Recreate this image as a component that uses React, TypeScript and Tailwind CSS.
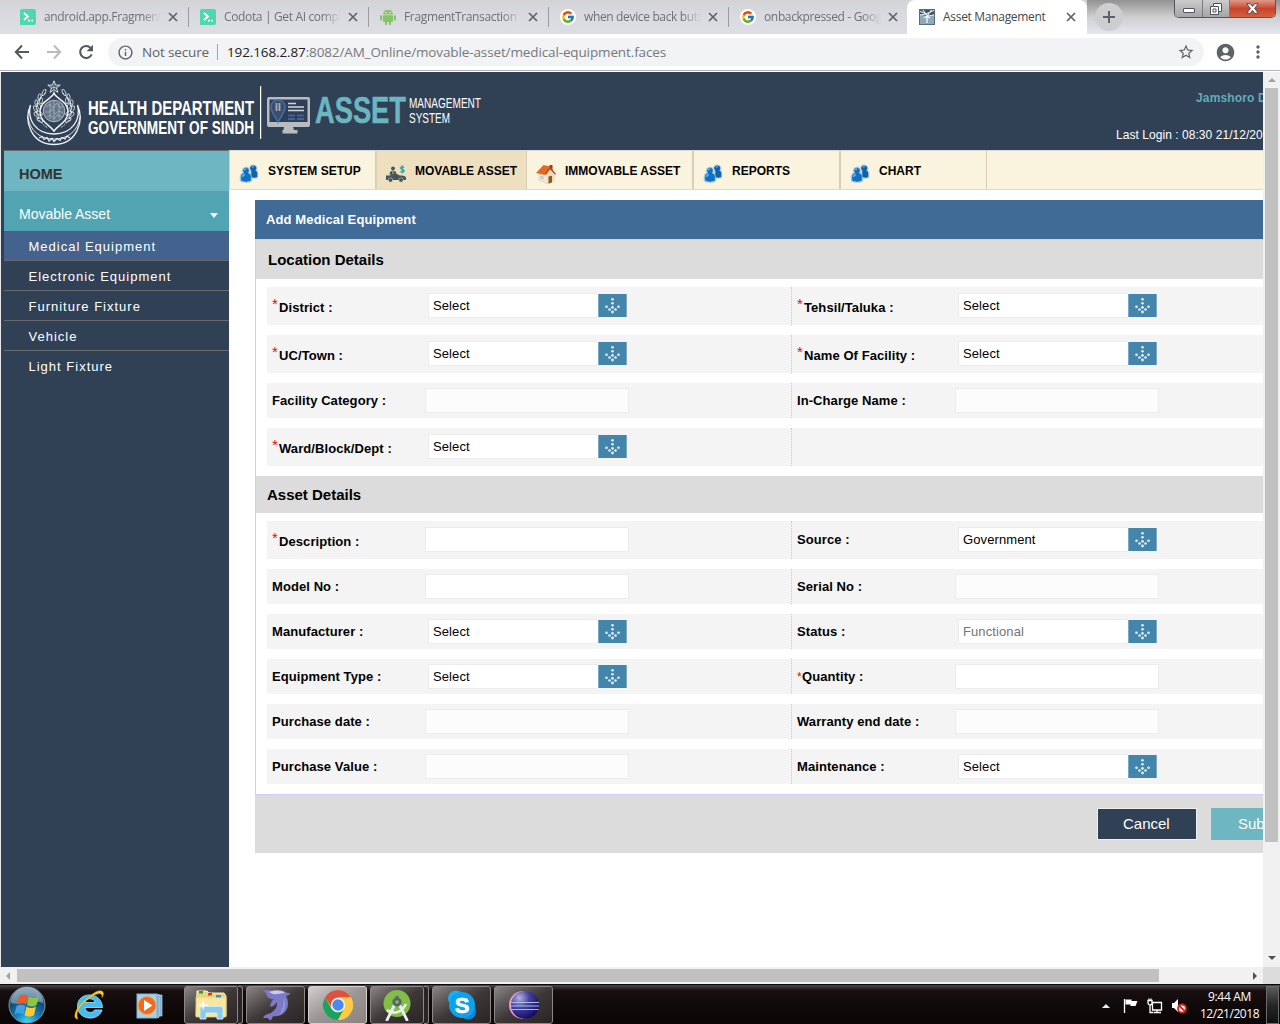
import React from "react";
import { MdInfoOutline, MdStarBorder, MdAccountCircle, MdMoreVert } from "react-icons/md";
import { FcGoogle } from "react-icons/fc";

/* ---------- Browser chrome ---------- */

function CloseGlyph({ className = "" }: { className?: string }) {
  return (
    <svg width="14" height="14" viewBox="0 0 14 14" className={`shrink-0 ${className}`}>
      <path d="M3 3l8 8M11 3l-8 8" stroke="#5f6368" strokeWidth="1.700" />
    </svg>
  );
}

function CodotaIcon() {
  return (
    <svg width="16" height="16" viewBox="0 0 16 16">
      <path d="M2 0h12a2 2 0 0 1 2 2v12a2 2 0 0 1-2 2H0V2a2 2 0 0 1 2-2z" fill="#4dd8ae" />
      <path d="M4 4l4 3.5L4 11" fill="none" stroke="#fff" strokeWidth="1.8" />
      <path d="M8 11.6h2M11.4 11.6h1.6" stroke="#fff" strokeWidth="1.8" />
    </svg>
  );
}

function AndroidIcon() {
  return (
    <svg width="16" height="16" viewBox="0 0 16 16" fill="#86c36a">
      <path d="M3 5.600a5 4.600 0 0 1 10 0z" />
      <path d="M5 .3l1.200 2M11 .3l-1.200 2" stroke="#86c36a" strokeWidth=".8" />
      <rect x="3" y="6.300" width="10" height="6.700" rx="1" />
      <rect x="0" y="6.200" width="2.200" height="5.500" rx="1.100" />
      <rect x="13.800" y="6.200" width="2.200" height="5.500" rx="1.100" />
      <rect x="5" y="11" width="2.200" height="5" rx="1.100" />
      <rect x="8.800" y="11" width="2.200" height="5" rx="1.100" />
      <circle cx="6" cy="3.700" r=".6" fill="#fff" />
      <circle cx="10" cy="3.700" r=".6" fill="#fff" />
    </svg>
  );
}

function GoogleIcon() {
  return (
    <span className="flex h-4 w-4 items-center justify-center rounded-full bg-white">
      <FcGoogle size={14} />
    </span>
  );
}

function AssetFavicon() {
  return (
    <svg width="16" height="16" viewBox="0 0 16 16">
      <rect width="16" height="16" fill="#8ea9ba" />
      <path d="M0 0h16v5l-8 2-8-2z" fill="#3d5262" />
      <path d="M0 2l7 3 9-4M1 6l6-1 2 2 6-1M3 0l4 5M13 0L9 6" stroke="#e4edf2" strokeWidth="1.1" fill="none" />
      <path d="M8 6v8M5 9l3-2 3 2" stroke="#f4f8fa" strokeWidth="1.3" fill="none" />
      <rect x=".5" y=".5" width="15" height="15" fill="none" stroke="#5b6d79" />
    </svg>
  );
}

const tabs = [
  { title: "android.app.Fragment", icon: <CodotaIcon /> },
  { title: "Codota | Get AI comple", icon: <CodotaIcon /> },
  { title: "FragmentTransaction", icon: <AndroidIcon /> },
  { title: "when device back button", icon: <GoogleIcon /> },
  { title: "onbackpressed - Google", icon: <GoogleIcon /> },
];

function TabStrip() {
  return (
    <div className="flex h-[34px] bg-linear-to-b from-[#d3d3d6] via-[#dadbe0] to-[#dcdee4] pl-2 font-['Open_Sans',sans-serif] text-[12px] text-[#6d7074]">
      {tabs.map((t, i) => (
        <div key={t.title} className="flex h-[34px] w-[180px] shrink-0 items-center pl-3">
          <span className="flex h-4 w-4 shrink-0 items-center justify-center">{t.icon}</span>
          <span className="ml-2 w-[117px] shrink-0 overflow-hidden whitespace-nowrap tracking-[-0.35px] [mask-image:linear-gradient(90deg,#000_84%,transparent)]">
            {t.title}
          </span>
          <CloseGlyph className="ml-[5px]" />
          {i < 4 && <span className="ml-[8px] h-5 w-px shrink-0 bg-[#9b9ca0]" />}
        </div>
      ))}
      <div className="-ml-px flex h-[34px] w-[180px] shrink-0 items-center rounded-t-[8px] bg-white pl-3 text-[#45484c]">
        <AssetFavicon />
        <span className="ml-2 w-[120px] whitespace-nowrap tracking-[-0.3px]">Asset Management</span>
        <CloseGlyph className="ml-px" />
      </div>
      <div className="flex h-[34px] flex-1 items-start justify-between bg-linear-to-b from-[#929292] via-[#cfcfd0] to-[#e4e6f1] pl-2 pr-1">
        <span className="mt-[3px] flex h-7 w-7 items-center justify-center rounded-full bg-[#cdced2]">
          <svg width="14" height="14" viewBox="0 0 14 14">
            <path d="M7 1v12M1 7h12" stroke="#5f6368" strokeWidth="2" />
          </svg>
        </span>
        <div className="flex h-[18px] w-[102px] overflow-hidden rounded-b-[5px] border border-t-0 border-[#55555a]">
          <div className="flex w-7 items-center justify-center border-r border-[#7b7b7e] bg-linear-to-b from-[#cccccd] to-[#a5a5a7]">
            <span className="mt-1 h-[5px] w-3 rounded-[1px] border border-[#50545c] bg-white" />
          </div>
          <div className="flex w-[27px] items-center justify-center border-r border-[#7b7b7e] bg-linear-to-b from-[#cccccd] to-[#a5a5a7]">
            <svg width="12" height="12" viewBox="0 0 12 12">
              <path d="M3.5.5h8v8h-3v3h-8v-8h3z" fill="#fff" stroke="#4b505c" />
              <path d="M3.5 3.5h5v5M3 6h3v3H3z" fill="none" stroke="#4b505c" />
            </svg>
          </div>
          <div className="flex flex-1 items-center justify-center bg-linear-to-b from-[#dd9a8a] via-[#c9432a] to-[#d2603f]">
            <svg width="13" height="11" viewBox="0 0 13 11">
              <path d="M.7.7h3.6l2.2 2.7L8.7.7h3.6L8.6 5.4l3.7 4.9H8.7L6.5 7.5l-2.2 2.8H.7l3.7-4.9z" fill="#fff" stroke="#5a4550" />
            </svg>
          </div>
        </div>
      </div>
    </div>
  );
}

function Toolbar() {
  return (
    <div className="flex h-9 items-center bg-white font-['Open_Sans',sans-serif] text-[13.5px] text-[#5f6368]">
      <svg width="16" height="16" viewBox="0 0 16 16" className="ml-[14px]" fill="none" stroke="#55595e" strokeWidth="2">
        <path d="M15 8H2.500M8 1.500L1.800 8 8 14.500" />
      </svg>
      <svg width="16" height="16" viewBox="0 0 16 16" className="ml-[16px]" fill="none" stroke="#b9bbbd" strokeWidth="2">
        <path d="M1 8h12.500M8 1.500L14.200 8 8 14.500" />
      </svg>
      <svg width="16" height="16" viewBox="0 0 16 16" className="ml-[16px]">
        <path d="M13.700 10.300A6 6 0 1 1 12.500 3.800" fill="none" stroke="#55595e" strokeWidth="2.100" />
        <path d="M15 .8v6.400H8.600z" fill="#55595e" />
      </svg>
      <div className="ml-[14px] flex h-7 w-[1096px] items-center rounded-full bg-[#f1f3f4] pl-[9px] pr-[9px]">
        <MdInfoOutline size={17} />
        <span className="ml-[8px] w-[75px] whitespace-nowrap tracking-[-0.15px]">Not secure</span>
        <span className="h-4 w-px bg-[#a2a4a7]" />
        <span className="ml-[9px] whitespace-nowrap tracking-[-0.125px] text-[#76797d]">
          <span className="text-[#202124]">192.168.2.87</span>:8082/AM_Online/movable-asset/medical-equipment.faces
        </span>
        <MdStarBorder size={18} className="ml-auto" />
      </div>
      <MdAccountCircle size={21} className="ml-[11px]" />
      <MdMoreVert size={20} className="ml-[12px]" />
    </div>
  );
}

/* ---------- Site header ---------- */

function SindhEmblem() {
  const leaves = [
    [16, 40, -40], [12.5, 35, -25], [11.5, 29, -5], [12.5, 23, 12], [15.5, 17, 28], [20, 12.5, 45],
    [15.5, 33, -35], [15, 26, -5], [17, 20.5, 20],
  ];
  return (
    <svg width="56" height="66" viewBox="0 0 56 66" fill="none" stroke="#eef1f4">
      <path d="M28 .8l1.6 4.3h4.6l-3.7 2.8 1.4 4.5-3.9-2.7-3.9 2.7 1.4-4.5-3.7-2.8h4.6z" strokeWidth=".9" />
      <path d="M28 4v6M25 6.5l6 2M31 6.500l-6 2" strokeWidth=".5" />
      <path d="M4.500 25C-3 42 6 64.500 28 64.500S59 42 51.500 25C55 40 46 54 28 54S1 40 4.500 25z" strokeWidth="1.300" />
      <path d="M2 37c2 14 12 22 26 22s24-8 26-22" strokeWidth=".9" />
      <path d="M13 58l3-1.500 2 3 3-2 2 3.500 3-2.500 2 3 3-3 3 2 2-3 3 1.500 2-3 3 2" strokeWidth="1.200" />
      <path d="M28 13c-2 6-14 8-14 18.500S24 45 28 51c4-6 14-9 14-19.500S30 19 28 13z" strokeWidth="1.500" />
      <circle cx="28" cy="31" r="10.800" strokeWidth=".6" fill="#65758a" />
      <path d="M20 27l4-3 3 4 4-5 3 5 3-2M19 32h5l2-3 3 5 4-3 4 2M21 37l4-2 3 4 3-4 5 2M28 21v20M24 22v17M33 23v15" strokeWidth=".6" stroke="#b7c0ca" />
      {leaves.map(([x, y, r], i) => (
        <g key={i} strokeWidth=".9" strokeOpacity=".85">
          <ellipse cx={x - 2} cy={y} rx="1.500" ry="3.300" transform={`rotate(${r - 20} ${x - 2} ${y})`} />
          <ellipse cx={58 - x} cy={y} rx="1.500" ry="3.300" transform={`rotate(${20 - r} ${58 - x} ${y})`} />
        </g>
      ))}
      <path d="M19 13C6 24 8 40 22 48M37 13c13 11 11 27-3 35" strokeWidth=".8" strokeDasharray="2 1" />
    </svg>
  );
}

function HeaderLogo() {
  return (
    <svg width="400" height="60" viewBox="0 0 400 60" fontFamily="'Liberation Sans Narrow','Liberation Sans',Arial,sans-serif">
      <g fill="#fff" fontWeight="700">
        <text x="0" y="33" fontSize="20.500" textLength="166" lengthAdjust="spacingAndGlyphs">HEALTH DEPARTMENT</text>
        <text x="0" y="52" fontSize="19" textLength="166" lengthAdjust="spacingAndGlyphs">GOVERNMENT OF SINDH</text>
      </g>
      <rect x="172" y="4" width="1.200" height="53" fill="#fff" />
      <g>
        <rect x="179" y="15" width="43" height="30" rx="2" fill="#b9bcbf" />
        <rect x="181.500" y="17.500" width="38" height="22.500" fill="#303f57" />
        <path d="M196 45h9l1 3h3.500v3.500h-15V48h1z" fill="#b9bcbf" />
        <path d="M190 40c-3-6-7-10-7-15a7 7 0 0 1 14 0c0 5-4 9-7 15z" fill="#3f4d68" stroke="#426fa8" strokeWidth="1.600" />
        <path d="M188.500 21v8M191.500 21v8" stroke="#a3acb8" strokeWidth="1.800" />
        <path d="M200 21.500h8M200 25h16M200 28.500h16" stroke="#cfd4da" strokeWidth="1.600" />
        <path d="M200 33.500h7M209 33.500h7M200 37h7M209 37h7" stroke="#3d6399" strokeWidth="2" />
      </g>
      <text x="227" y="40.700" fontSize="36" fontWeight="700" fill="#6cb6c2" stroke="#6cb6c2" strokeWidth=".5" textLength="91" lengthAdjust="spacingAndGlyphs">ASSET</text>
      <g fill="#fff" fontSize="14">
        <text x="321" y="26" textLength="72" lengthAdjust="spacingAndGlyphs">MANAGEMENT</text>
        <text x="321" y="41" textLength="41" lengthAdjust="spacingAndGlyphs">SYSTEM</text>
      </g>
    </svg>
  );
}

/* ---------- Navigation ---------- */

function UsersIcon() {
  const back = "M14.500 1.500a2.800 2.800 0 0 1 1.800 5q2 .5 2 2.500v4q-3 1.500-6 0V6.500a2.800 2.800 0 0 1 2.200-5z";
  const front = "M7 3.500a3.200 3.200 0 0 1 2.200 5.500q3 .8 3 3.500v4.300q-5 2.400-10.400 0V12.500q0-2.700 3-3.500A3.200 3.200 0 0 1 7 3.500z";
  return (
    <svg width="20" height="20" viewBox="0 0 20 20">
      <g stroke="#c3d3dc" strokeWidth="2.200" strokeLinejoin="round">
        <path d={back} />
        <path d={front} />
      </g>
      <path d={back} fill="#0c63ac" />
      <path d={front} fill="#0e71c4" stroke="#a9d2f0" strokeWidth=".5" />
      <path d="M5.400 6a1.800 1.800 0 0 1 1.600-1.100M3.500 13q.3-2 2.200-2.500M13.300 3.500a1.500 1.500 0 0 1 1.300-.7" stroke="#6dbcf0" strokeWidth="1.400" fill="none" />
    </svg>
  );
}

function CarIcon() {
  return (
    <svg width="20" height="18" viewBox="0 0 20 18">
      <circle cx="7" cy="3.500" r="1.900" fill="#44565a" />
      <path d="M3.500 9.500c0-3 1.500-3.800 3.500-3.800s3.500.8 3.500 3.800z" fill="#44565a" />
      <path d="M7 6v3" stroke="#e9dcc0" strokeWidth=".8" />
      <path d="M0 10.500h4l1-1.500h6l3 1.500c3 0 6 .5 6 2.500v2H0z" fill="#44565a" />
      <circle cx="4.500" cy="15" r="2.200" fill="#44565a" stroke="#eedfbf" strokeWidth=".5" />
      <circle cx="15" cy="15" r="2.200" fill="#44565a" stroke="#eedfbf" strokeWidth=".5" />
      <path d="M18 2.500c-.8-1-3.400-.9-3.400.6 0 1.700 3.500 1 3.500 2.800 0 1.500-2.800 1.600-3.700.4M16.300.3v8" stroke="#35a5a8" strokeWidth="1.400" fill="none" />
    </svg>
  );
}

function HouseIcon() {
  return (
    <svg width="22" height="22" viewBox="0 0 22 22">
      <rect x="14.500" y="2" width="3" height="5" fill="#9b3c16" />
      <path d="M4 10l6-3 9 3v8l-6 3-9-4z" fill="#f5e8cf" stroke="#d5bd94" strokeWidth=".5" />
      <path d="M12 11l3.500-6 4 6v7.500L12.500 21z" fill="#efdcb9" />
      <path d="M1 10L8.500 2l6.500 1.500L9.500 12z" fill="#e06b22" />
      <path d="M14.800 3.200L21 11l-1 .8-5-5.600-3.800 5.600-1.600-.5z" fill="#bc4715" />
      <path d="M13.500 13.500l3.500-.7v6.600l-3.500 1z" fill="#8a5a2b" />
      <path d="M5.500 12.500l3 1v3l-3-1z" fill="#a9c9dd" />
    </svg>
  );
}

function NavItem({ icon, label, className, active }: { icon: React.ReactNode; label: string; className: string; active?: boolean }) {
  return (
    <div className={`flex h-full shrink-0 border-r border-[#d9cfb5] pl-[8px] ${active ? "bg-[#eedfbf]" : ""} ${className}`}>
      <span className="mt-[13px] flex h-5 w-[22px] items-center justify-center">{icon}</span>
      <span className="ml-[8px] mt-[11px] whitespace-nowrap text-[12px] font-bold leading-[18px] text-black">{label}</span>
    </div>
  );
}

const sideItems = ["Medical Equipment", "Electronic Equipment", "Furniture Fixture", "Vehicle", "Light Fixture"];

function Sidebar() {
  return (
    <div className="flex w-[228px] shrink-0 flex-col bg-[#304156] pl-[3px] text-white">
      <div className="flex h-[41px] items-center border-t border-[#6a6a6c] bg-[#6db6c2] pl-[15px] pt-[8px] text-[14.5px] font-bold text-[#333]">HOME</div>
      <div className="flex h-10 items-center justify-between border-t-[3px] border-[#589fb7] bg-[#51a4b1] pl-[15px] pr-[11px] pt-[4px] text-[14px]">
        Movable Asset
        <span className="mt-px h-0 w-0 border-x-[4px] border-t-[5px] border-x-transparent border-t-white" />
      </div>
      {sideItems.map((s, i) => (
        <div
          key={s}
          className={`flex h-[30px] items-center pl-[24.5px] pt-[2px] text-[13px] tracking-[1px] ${i === 0 ? "bg-[#43628d]" : ""} ${i < 4 ? "border-b border-[#6a6a6c]" : ""}`}
        >
          {s}
        </div>
      ))}
    </div>
  );
}

/* ---------- Form ---------- */

type Field = { label: string; star?: boolean | "small"; kind?: "select" | "input" | "readonly"; value?: string; muted?: boolean };

function Select({ value = "Select", muted }: { value?: string; muted?: boolean }) {
  return (
    <div className="ml-[3px] flex h-[25px] w-[199px] items-center">
      <span className={`flex h-[25px] w-[170px] items-center border border-r-0 border-[#ececec] bg-white pl-[4px] text-[13px] tracking-[0.1px] ${muted ? "text-[#757575]" : "text-black"}`}>{value}</span>
      <span className="flex h-[23px] w-[29px] items-center justify-center border-x border-[#79a9c4] bg-[#4486ab]">
        <svg width="17" height="17" viewBox="0 0 17 17" fill="#e4eff5">
          <circle cx="8.500" cy="2.200" r="1.300" />
          <circle cx="8.500" cy="6.300" r="1.300" />
          <circle cx="8.500" cy="10.400" r="1.300" />
          <circle cx="8.500" cy="15" r="1.400" />
          <circle cx="2.500" cy="9.800" r="1.300" />
          <circle cx="14.500" cy="9.800" r="1.300" />
          <circle cx="5.500" cy="12.500" r="1.300" />
          <circle cx="11.500" cy="12.500" r="1.300" />
        </svg>
      </span>
    </div>
  );
}

function FieldCell({ field, right, tall }: { field?: Field; right?: boolean; tall: boolean }) {
  return (
    <div
      className={`flex h-full shrink-0 items-start pl-[5px] ${tall ? "pt-[6px]" : "pt-[5px]"} ${
        right ? "w-[560px] border-l border-dotted border-[#c5c5ee]" : "w-[524px]"
      }`}
    >
      {field && (
        <>
          <span className={`flex h-[25px] shrink-0 items-center whitespace-nowrap text-[13px] font-bold tracking-[0.08px] text-black ${right ? "w-[158px]" : "w-[153px]"}`}>
            {field.star === true && <span className="-mt-[4px] w-[7px] text-[15px] font-normal leading-4 text-[#f00]">*</span>}
            {field.star === "small" && <span className="w-[5px] text-[12px] font-normal text-[#f00]">*</span>}
            <span className={field.star === true ? "mt-[4px]" : ""}>{field.label} :</span>
          </span>
          {field.kind === "select" ? (
            <Select value={field.value} muted={field.muted} />
          ) : (
            <span className={`h-[25px] w-[204px] border border-[#ececec] ${field.kind === "readonly" ? "bg-[#fcfcfc]" : "bg-white"}`} />
          )}
        </>
      )}
    </div>
  );
}

function Row({ left, right }: { left: Field; right?: Field }) {
  const tall = left.star === true;
  return (
    <div className={`ml-[11px] flex shrink-0 overflow-hidden bg-[#f4f4f4] ${tall ? "h-[38px]" : "h-[35px]"}`}>
      <FieldCell field={left} tall={tall} />
      <FieldCell field={right} tall={tall} right />
    </div>
  );
}

const locationRows: [Field, Field?][] = [
  [{ label: "District", star: true, kind: "select" }, { label: "Tehsil/Taluka", star: true, kind: "select" }],
  [{ label: "UC/Town", star: true, kind: "select" }, { label: "Name Of Facility", star: true, kind: "select" }],
  [{ label: "Facility Category", kind: "readonly" }, { label: "In-Charge Name", kind: "readonly" }],
  [{ label: "Ward/Block/Dept", star: true, kind: "select" }],
];

const assetRows: [Field, Field?][] = [
  [{ label: "Description", star: true, kind: "input" }, { label: "Source", kind: "select", value: "Government" }],
  [{ label: "Model No", kind: "input" }, { label: "Serial No", kind: "readonly" }],
  [{ label: "Manufacturer", kind: "select" }, { label: "Status", kind: "select", value: "Functional", muted: true }],
  [{ label: "Equipment Type", kind: "select" }, { label: "Quantity", star: "small", kind: "input" }],
  [{ label: "Purchase date", kind: "readonly" }, { label: "Warranty end date", kind: "readonly" }],
  [{ label: "Purchase Value", kind: "readonly" }, { label: "Maintenance", kind: "select" }],
];

function EquipmentForm() {
  return (
    <div className="ml-[26px] mt-[10px] flex flex-col">
      <div className="flex h-[39px] items-center bg-[#3f6b96] pl-[11px] text-[13px] font-bold tracking-[0.12px] text-white">Add Medical Equipment</div>
      <div className="flex flex-col border-b border-l border-t border-[#ccccff] bg-white">
        <div className="flex h-[39px] items-center bg-[#dcdcdc] pl-[12px] pt-px text-[15px] font-bold text-black">Location Details</div>
        <div className="flex flex-col gap-[10px] pb-[10px] pt-[8px]">
          {locationRows.map(([l, r]) => <Row key={l.label} left={l} right={r} />)}
        </div>
        <div className="flex h-[37px] items-center bg-[#dcdcdc] pl-[11px] pt-[2px] text-[15px] font-bold text-black">Asset Details</div>
        <div className="flex flex-col gap-[10px] pb-[10px] pt-[8px]">
          {assetRows.map(([l, r]) => <Row key={l.label} left={l} right={r} />)}
        </div>
      </div>
      <div className="flex h-[58px] overflow-hidden bg-[#dcdcdc] pt-[13px] text-[15px] text-white">
        <span className="ml-[842px] flex h-8 w-[100px] shrink-0 items-center border border-[#efefef] bg-[#304156] pl-[25px]">Cancel</span>
        <span className="ml-[14px] flex h-8 w-[100px] shrink-0 items-center bg-[#6db6c2] pl-[27px]">Submit</span>
      </div>
    </div>
  );
}

/* ---------- Taskbar ---------- */

function TaskButton({ children, stacked, active, className = "" }: { children: React.ReactNode; stacked?: boolean; active?: boolean; className?: string }) {
  return (
    <div className={`flex h-[38px] shrink-0 ${className}`}>
      <div
        className={`flex items-center justify-center rounded-[3px] border ${stacked ? "w-[54px]" : "w-[59px]"} ${
          active
            ? "border-[#d4d0d0] bg-linear-to-br from-[#d0cecd] via-[#9b9594] to-[#8a8382]"
            : "border-[#8d8888] bg-linear-to-br from-[#8a8685] via-[#3e3838] to-[#2b2424]"
        }`}
      >
        {children}
      </div>
      {stacked && <span className="w-[5px] rounded-r-[3px] border-y border-r border-[#8d8888] bg-[#2a2424]" />}
    </div>
  );
}

function StartOrb() {
  return (
    <svg width="38" height="38" viewBox="0 0 38 38">
      <defs>
        <radialGradient id="orb" cx=".5" cy="1" r=".95">
          <stop offset="0" stopColor="#3fe0fb" />
          <stop offset=".35" stopColor="#1683bd" />
          <stop offset=".7" stopColor="#174a71" />
          <stop offset="1" stopColor="#5e87a5" />
        </radialGradient>
      </defs>
      <circle cx="19" cy="19" r="18" fill="url(#orb)" stroke="#7d95a5" />
      <path d="M3 17a16 16 0 0 1 32 0c-8-4-24 3-32 0z" fill="#c8dae6" opacity=".45" />
      <path d="M11 10c3.500-2 6.500-2 9 0l-2 8.500c-3-2-6-2-9 0z" fill="#ea5b26" />
      <path d="M21 10.500c3 2 6 2 10 0l-2.500 8.500c-3 2-6 2-9.500 0z" fill="#8dc63f" />
      <path d="M8.500 20c3-2 6-2 9 0l-2 8.500c-3-2-6-2-9 0z" fill="#3fa0e6" />
      <path d="M18.500 20.500c3 2 6 2 9.500 0l-2 8.500c-3 2-7 2-9.500 0z" fill="#fcc92f" />
    </svg>
  );
}

function IeIcon() {
  return (
    <svg width="32" height="32" viewBox="0 0 32 32">
      <path d="M29.500 18.500H12c.3 5.500 8 6.500 9.500 2.500h7.500C25.500 33 4.500 31.500 4.500 17S28.500 1.500 29.500 18.500zM12 13.500h10c-.5-5-9.500-5-10 0z" fill="#45bdf0" stroke="#a8e4fb" strokeWidth=".8" fillRule="evenodd" />
      <path d="M5 30c-5 .5-4-8 3-15S25-1 29.500 2.500c1.400 1.400 1 4-.5 6 .5-3-1-4.500-3.500-4C18 6 5 17 4 25c-.2 1.800.2 4 1 5z" fill="#fbcf27" stroke="#e5a90b" strokeWidth=".5" />
    </svg>
  );
}

function MediaIcon() {
  return (
    <svg width="28" height="26" viewBox="0 0 28 26">
      <path d="M8 2h18v21H8z" fill="#80b2d2" stroke="#b4d6ea" strokeWidth=".7" />
      <path d="M5 1.500h18v23H5z" fill="#6aa7cf" stroke="#c4e1f2" strokeWidth=".7" />
      <rect x="1" y="1" width="20" height="24" fill="#a9cfe6" stroke="#7cb4d8" />
      <circle cx="11" cy="12.500" r="9" fill="#ee6d1c" stroke="#f7a35f" />
      <path d="M8 7l8.500 5.500L8 18z" fill="#fff" />
    </svg>
  );
}

function ExplorerIcon() {
  return (
    <svg width="34" height="32" viewBox="0 0 34 32">
      <path d="M3 2h10l2 2h15l2 3v20H2z" fill="#eed383" stroke="#fff1b8" />
      <path d="M2 8h30v20H2z" fill="#f8e7a2" stroke="#e5c969" strokeWidth=".8" />
      <rect x="5" y="2" width="4" height="2.500" fill="#19a52b" />
      <rect x="14" y="4" width="4" height="2.500" fill="#d93d26" />
      <rect x="22" y="6" width="5" height="2.500" fill="#2a99dc" />
      <path d="M6 30V20q0-2.500 2.500-2.500h18q2.500 0 2.500 2.500v10h-6v-6H12v6z" fill="#8ccbe8" stroke="#caeaf6" />
      <path d="M9 10l1.200 5 5 1.200-5 1.300L9 22l-1-4.500-5-1.300L8 15z" fill="#fff" opacity=".9" />
    </svg>
  );
}

function DolphinIcon() {
  return (
    <svg width="32" height="32" viewBox="0 0 32 32">
      <path d="M3 1.500c4-.8 7-.5 9 .5 7-2 12-.5 14 1.500l4 .7c0 1.500-2 2.300-4 2.300 3.500 7 2.500 15-4 19-3 1.800-6 1.500-9 1.800-1 1.700-1 3.200-2.500 4.200-1.500-.5-2-1.700-2.300-2.500-2 0-3.700.3-5-.3C4 26 7 25 10 24.500c5-3 7.500-6.500 7-11.500-1.500 2.500-4 5-7 4.500.3-3 1.500-5 3.500-7.500C9 10 7 8 6.500 5.500 6 4 4.500 2.500 3 1.500z" fill="#7c79c6" />
      <path d="M9 3c6-2 12-2 16 1-4 0-9 2-12 1z" fill="#c9caee" />
      <path d="M24 8c2 7 1 14-4 17 3-6 4-11 4-17z" fill="#9a9ad9" />
    </svg>
  );
}

function ChromeIcon() {
  return (
    <svg width="32" height="32" viewBox="0 0 32 32">
      <circle cx="16" cy="16" r="15" fill="#fcc934" />
      <path d="M3 8.500A15 15 0 0 1 29 8.500H16a7.500 7.500 0 0 0-7 9z" fill="#dd5144" />
      <path d="M3 8.500A15 15 0 0 0 16 31l6.500-11.500A7.500 7.500 0 0 1 9.500 19.700z" fill="#1aa260" />
      <path d="M16 8.500h13A15 15 0 0 1 16 31l6.500-11.500A7.500 7.500 0 0 0 16 8.500z" fill="#fdcb43" />
      <circle cx="16" cy="16" r="7.200" fill="#f4f6f8" />
      <circle cx="16" cy="16" r="5.700" fill="#4a89f3" />
    </svg>
  );
}

function StudioIcon() {
  return (
    <svg width="30" height="32" viewBox="0 0 30 32">
      <circle cx="15" cy="14.500" r="13.500" fill="#82bd45" />
      <path d="M12 17L5 31M18 17l7 14" stroke="#eceff1" strokeWidth="2.800" strokeLinecap="round" />
      <path d="M5 21c6 4.500 14 3.500 19-6" fill="none" stroke="#eceff1" strokeWidth="2.600" />
      <path d="M13.500 7h3v3h-3z" fill="#54666b" />
      <circle cx="15" cy="13" r="3.200" fill="#8bc34a" stroke="#54666b" strokeWidth="2.800" />
    </svg>
  );
}

function SkypeIcon() {
  return (
    <svg width="30" height="32" viewBox="0 0 30 32">
      <circle cx="9" cy="9.500" r="8" fill="#12b3f3" />
      <circle cx="21" cy="22.500" r="8" fill="#0a8add" />
      <circle cx="15" cy="16" r="13" fill="#0ba3ea" />
      <text x="15" y="24" textAnchor="middle" fontFamily="'Liberation Sans',sans-serif" fontWeight="700" fontSize="22" fill="#fff" stroke="#fff" strokeWidth=".6">S</text>
    </svg>
  );
}

function EclipseIcon() {
  return (
    <svg width="32" height="30" viewBox="0 0 32 30">
      <defs>
        <radialGradient id="ecl" cx=".3" cy=".25" r=".8">
          <stop offset="0" stopColor="#b4b1e0" />
          <stop offset=".45" stopColor="#4540a0" />
          <stop offset="1" stopColor="#130b61" />
        </radialGradient>
      </defs>
      <circle cx="15" cy="15" r="14" fill="#e59bd0" />
      <circle cx="17" cy="15" r="14" fill="url(#ecl)" />
      <path d="M3 12.500h28M3 16h28M3.500 19.500h27" stroke="#a9bde5" strokeWidth="1.200" />
    </svg>
  );
}

function Tray() {
  return (
    <div className="ml-auto flex h-full items-center text-white">
      <span className="mt-[3px] h-0 w-0 border-x-[4px] border-b-[4px] border-x-transparent border-b-[#eee]" />
      <svg width="16" height="16" viewBox="0 0 16 16" className="ml-[13px] mt-[2px]">
        <path d="M1.500 1v14" stroke="#fff" strokeWidth="1.300" />
        <path d="M2.500 1.500h6V3h6c-1 2-1 3-2 5h-5V6.500h-5z" fill="#fff" />
      </svg>
      <svg width="16" height="16" viewBox="0 0 16 16" className="ml-[8px] mt-[2px]" fill="none" stroke="#fff" strokeWidth="1.300">
        <path d="M5.500 4.500h9v7.500h-9zM10 12v2.500M6.500 14.500h7.500M3 6.500v8h3M1 2.500h4v2.500a2 2 0 0 1-4 0zM2 .5v2M4 .5v2" />
      </svg>
      <svg width="17" height="16" viewBox="0 0 17 16" className="ml-[8px] mt-[2px]">
        <path d="M1 5h2l4-4v13l-4-4H1z" fill="#fff" />
        <circle cx="11" cy="10.500" r="4" fill="#fff" stroke="#d9231c" strokeWidth="1.800" />
        <path d="M8.300 8l5.500 5" stroke="#d9231c" strokeWidth="1.800" />
      </svg>
      <div className="ml-[8px] flex w-[67px] flex-col items-center whitespace-nowrap font-['Open_Sans',sans-serif] text-[12px] leading-[17px] tracking-[-0.45px]">
        <span className="tracking-[-0.3px]">9:44 AM</span>
        <span>12/21/2018</span>
      </div>
      <span className="ml-[3px] mr-px h-[38px] w-[13px] border border-[#6b6b6b] bg-linear-to-b from-[#5e5e5e] via-[#262626] to-[#111]" />
    </div>
  );
}

function Taskbar() {
  return (
    <div className="flex h-10 items-center border-t border-[#0a0a0a] bg-linear-to-b from-[#4b4646] via-[#160e0f] via-15% to-[#0a0506]">
      <div className="ml-[8px] h-[38px] w-[38px]"><StartOrb /></div>
      <div className="ml-[27px]"><IeIcon /></div>
      <div className="ml-[31px] mt-[2px]"><MediaIcon /></div>
      <TaskButton className="ml-[20px]" stacked><ExplorerIcon /></TaskButton>
      <TaskButton className="ml-[3px]"><DolphinIcon /></TaskButton>
      <TaskButton className="ml-[3px]" active><ChromeIcon /></TaskButton>
      <TaskButton className="ml-[3px]" stacked><StudioIcon /></TaskButton>
      <TaskButton className="ml-[3px]"><SkypeIcon /></TaskButton>
      <TaskButton className="ml-[3px]"><EclipseIcon /></TaskButton>
      <Tray />
    </div>
  );
}

/* ---------- Page ---------- */

function SitePage() {
  return (
    <div className="flex h-[895px] w-[1263px] flex-col overflow-hidden border-l border-[#e6e6e6] bg-white">
      <div className="flex h-[78px] shrink-0 overflow-hidden bg-[#304156]">
        <div className="ml-[25px] mt-[8px]"><SindhEmblem /></div>
        <div className="ml-[6px] mt-[10px]"><HeaderLogo /></div>
        <div className="ml-auto flex w-[147px] shrink-0 flex-col whitespace-nowrap text-[12px]">
          <span className="ml-[80px] mt-[17px] leading-[18px] font-bold tracking-[0.15px] text-[#62acba]">Jamshoro District</span>
          <span className="mt-[19px] leading-[18px] tracking-[0.05px] text-white">Last Login : 08:30 21/12/2018</span>
        </div>
      </div>
      <div className="flex flex-1">
        <Sidebar />
        <div className="flex flex-1 flex-col overflow-hidden">
          <div className="flex h-10 shrink-0 border-b border-l border-t border-b-[#d9d9d9] border-l-[#dccfb4] border-t-[#d9d9d9] bg-[#faf3dd]">
            <NavItem icon={<UsersIcon />} label="SYSTEM SETUP" className="w-[147px] border-r-2" />
            <NavItem icon={<CarIcon />} label="MOVABLE ASSET" className="w-[150px]" active />
            <NavItem icon={<HouseIcon />} label="IMMOVABLE ASSET" className="w-[167px] border-r-2" />
            <NavItem icon={<UsersIcon />} label="REPORTS" className="w-[147px] border-r-2" />
            <NavItem icon={<UsersIcon />} label="CHART" className="w-[146px]" />
          </div>
          <EquipmentForm />
        </div>
      </div>
    </div>
  );
}

export default function App() {
  return (
    <div className="flex h-[1024px] w-[1280px] flex-col overflow-hidden bg-white font-['Liberation_Sans',Arial,sans-serif]">
      <TabStrip />
      <Toolbar />
      <div className="flex h-[897px] border-t border-[#b4b3b7] pt-px">
        <SitePage />
        <div className="flex w-[17px] flex-col items-center bg-[#f1f1f1]">
          <span className="mt-[6px] h-0 w-0 border-x-[4px] border-b-[4px] border-x-transparent border-b-[#a3a3a3]" />
          <span className="mt-[6px] h-[754px] w-[13px] bg-[#c1c1c1]" />
          <span className="mb-[7px] mt-auto h-0 w-0 border-x-[4px] border-t-[4px] border-x-transparent border-t-[#505050]" />
        </div>
      </div>
      <div className="flex h-[17px] items-center bg-[#f1f1f1]">
        <span className="ml-[6px] h-0 w-0 border-y-[4px] border-r-[4px] border-y-transparent border-r-[#a3a3a3]" />
        <span className="ml-[7px] h-[13px] w-[1142px] bg-[#c1c1c1]" />
        <span className="ml-[94px] h-0 w-0 border-y-[4px] border-l-[4px] border-y-transparent border-l-[#505050]" />
        <span className="ml-auto h-full w-[17px] bg-[#dcdcdc]" />
      </div>
      <Taskbar />
    </div>
  );
}
